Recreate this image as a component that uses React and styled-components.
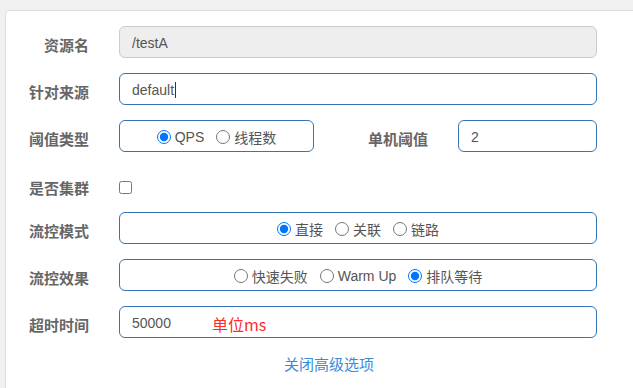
import styled, { createGlobalStyle } from "styled-components";

const GlobalStyle = createGlobalStyle`
  html, body {
    margin: 0;
    padding: 0;
    background: #f0f0f0;
    overflow: hidden;
  }
  body {
    font-family: "Liberation Sans", "Noto Sans CJK SC", sans-serif;
    color: #555;
  }
`;

const Panel = styled.div`
  display: flex;
  flex-direction: column;
  margin: 10px 0 0 5px;
  width: 648px;
  height: 378px;
  box-sizing: border-box;
  background: #fff;
  border: 1px solid #ddd;
  border-bottom: none;
  border-radius: 5px 0 0 0;
  padding-top: 15px;
`;

const Row = styled.div`
  flex: none;
  display: flex;
  align-items: center;
  height: ${({ $compact }) => ($compact ? "30px" : "32px")};
  margin-top: ${({ $compact }) => ($compact ? "3px" : "0")};
  margin-bottom: ${({ $compact }) => ($compact ? "12px" : "15px")};
`;

const Label = styled.label`
  flex: none;
  width: ${({ $w }) => $w || 83}px;
  padding-top: 5px;
  text-align: right;
  font-family: "Noto Sans CJK SC", sans-serif;
  font-weight: 700;
  font-size: 15px;
  color: #666;
  margin-right: ${({ $gap }) => $gap || 30}px;
`;

const Field = styled.div`
  position: relative;
  flex: none;
  width: ${({ $w }) => $w}px;
  height: 32px;
  box-sizing: border-box;
  border: 1px solid ${({ $disabled }) => ($disabled ? "#ccc" : "#3375b5")};
  background: ${({ $disabled }) => ($disabled ? "#eee" : "#fff")};
  border-radius: 6px;
  display: flex;
  align-items: center;
  justify-content: ${({ $center }) => ($center ? "center" : "flex-start")};
  padding: 2px 12px 0;
  font-size: 14px;
  color: #555;
`;

const Caret = styled.span`
  display: inline-block;
  width: 1px;
  height: 16px;
  background: #333;
  margin-left: 1px;
`;

const Hint = styled.span`
  position: absolute;
  left: 92px;
  top: 6px;
  font-size: 16px;
  color: #ff2b2b;
  font-family: "Noto Sans CJK SC", sans-serif;
  line-height: 22px;
`;

const Option = styled.label`
  display: inline-flex;
  align-items: center;
  margin-left: ${({ $first }) => ($first ? 0 : 12)}px;
  font-size: 14px;
  color: #555;

  input {
    width: 14px;
    height: 14px;
    margin: 0 4px 0 0;
    accent-color: #0075ff;
  }
`;

const Check = styled.input`
  width: 13px;
  height: 13px;
  margin: 4px 0 0;
`;

const LinkRow = styled.div`
  text-align: center;
  margin-top: 0;
`;

const Link = styled.a`
  font-family: "Noto Sans CJK SC", sans-serif;
  font-size: 15px;
  color: #3a8adb;
  text-decoration: none;
`;

const RadioGroup = ({ name, options, checked, w }) => (
  <Field $w={w} $center>
    {options.map((o, i) => (
      <Option key={o} $first={i === 0}>
        <input type="radio" name={name} defaultChecked={o === checked} />
        {o}
      </Option>
    ))}
  </Field>
);

export default function App() {
  return (
    <>
      <GlobalStyle />
      <Panel>
        <Row>
          <Label>资源名</Label>
          <Field $w={478} $disabled>/testA</Field>
        </Row>
        <Row>
          <Label>针对来源</Label>
          <Field $w={478}>
            default
            <Caret />
          </Field>
        </Row>
        <Row>
          <Label>阈值类型</Label>
          <RadioGroup name="grade" w={195} options={["QPS", "线程数"]} checked="QPS" />
          <Label $w={114}>单机阈值</Label>
          <Field $w={139}>2</Field>
        </Row>
        <Row $compact>
          <Label>是否集群</Label>
          <Check type="checkbox" />
        </Row>
        <Row>
          <Label>流控模式</Label>
          <RadioGroup name="strategy" w={478} options={["直接", "关联", "链路"]} checked="直接" />
        </Row>
        <Row>
          <Label>流控效果</Label>
          <RadioGroup
            name="behavior"
            w={478}
            options={["快速失败", "Warm Up", "排队等待"]}
            checked="排队等待"
          />
        </Row>
        <Row>
          <Label>超时时间</Label>
          <Field $w={478}>
            50000
            <Hint>单位ms</Hint>
          </Field>
        </Row>
        <LinkRow>
          <Link href="#">关闭高级选项</Link>
        </LinkRow>
      </Panel>
    </>
  );
}
